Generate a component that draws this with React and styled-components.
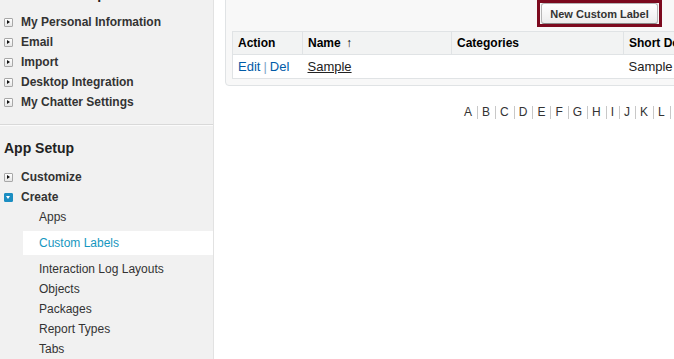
import React from 'react';
import styled, { createGlobalStyle } from 'styled-components';

const GlobalStyle = createGlobalStyle`
  html, body {
    margin: 0;
    padding: 0;
    background: #fff;
    overflow: hidden;
  }
  body {
    font-family: 'Liberation Sans', Arial, sans-serif;
    font-size: 12px;
    color: #333;
  }
`;

const personalItems = [
  'My Personal Information',
  'Email',
  'Import',
  'Desktop Integration',
  'My Chatter Settings',
];

const createItems = [
  { label: 'Apps' },
  { label: 'Custom Labels', selected: true },
  { label: 'Interaction Log Layouts' },
  { label: 'Objects' },
  { label: 'Packages' },
  { label: 'Report Types' },
  { label: 'Tabs' },
];

const letters = 'ABCDEFGHIJKLMNOPQRSTUVWXYZ'.split('');

function App() {
  return (
    <>
      <GlobalStyle />
      <Page>
        <Sidebar>
          <SidebarInner>
            <Section>
              <SectionTitle>Personal Setup</SectionTitle>
              {personalItems.map((item) => (
                <NavRow key={item}>
                  <Toggle />
                  {item}
                </NavRow>
              ))}
            </Section>
            <Section $second>
              <SectionTitle $second>App Setup</SectionTitle>
              <NavRow>
                <Toggle />
                Customize
              </NavRow>
              <NavRow>
                <Toggle $open />
                Create
              </NavRow>
              {createItems.map((item) => (
                <SubRow key={item.label} $selected={item.selected}>
                  {item.label}
                </SubRow>
              ))}
            </Section>
          </SidebarInner>
        </Sidebar>

        <Main>
          <Panel>
            <ButtonRow>
              <Highlight>
                <Button>New Custom Label</Button>
              </Highlight>
            </ButtonRow>
            <Table>
              <colgroup>
                <col style={{ width: 70 }} />
                <col style={{ width: 149 }} />
                <col style={{ width: 172 }} />
                <col style={{ width: 170 }} />
              </colgroup>
              <thead>
                <tr>
                  <Th>Action</Th>
                  <Th>
                    Name <SortArrow>↑</SortArrow>
                  </Th>
                  <Th>Categories</Th>
                  <Th>Short Description</Th>
                </tr>
              </thead>
              <tbody>
                <tr>
                  <Td>
                    <ActionLink>Edit</ActionLink>
                    <Pipe>|</Pipe>
                    <ActionLink>Del</ActionLink>
                  </Td>
                  <Td>
                    <NameLink>Sample</NameLink>
                  </Td>
                  <Td></Td>
                  <Td>Sample</Td>
                </tr>
              </tbody>
            </Table>
          </Panel>

          <Rolodex>
            {letters.map((l) => (
              <Letter key={l}>{l}</Letter>
            ))}
          </Rolodex>
        </Main>
      </Page>
    </>
  );
}

const Page = styled.div`
  display: flex;
  width: 674px;
  height: 359px;
  overflow: hidden;
`;

const Sidebar = styled.div`
  flex: 0 0 213px;
  background: #f1f1f1;
  border-right: 1px solid #e2e2e2;
  overflow: hidden;
`;

const SidebarInner = styled.div`
  margin-top: -28px;
`;

const Section = styled.div`
  padding: 13px 0 ${(p) => (p.$second ? '0' : '12px')};
  border-bottom: ${(p) => (p.$second ? 'none' : '1px solid #d9d9d9')};
  border-top: ${(p) => (p.$second ? '1px solid #fbfbfb' : 'none')};
`;

const SectionTitle = styled.h2`
  margin: 0 0 ${(p) => (p.$second ? '10px' : '9px')} 4px;
  font-size: 14px;
  line-height: 18px;
  font-weight: bold;
  color: #222;
`;

const NavRow = styled.div`
  display: flex;
  align-items: center;
  gap: 8px;
  height: 20px;
  padding-left: 4px;
  font-weight: bold;
  color: #333;
`;

const Toggle = styled.span`
  position: relative;
  box-sizing: border-box;
  width: 9px;
  height: 9px;
  border: 1px solid ${(p) => (p.$open ? '#1c8ec2' : '#a8a8a8')};
  border-radius: 1px;
  background: ${(p) =>
    p.$open ? '#1c8ec2' : 'linear-gradient(#ffffff, #e6e6e6)'};

  &::after {
    content: '';
    position: absolute;
    left: ${(p) => (p.$open ? '1px' : '2px')};
    top: ${(p) => (p.$open ? '2px' : '1px')};
    width: 0;
    height: 0;
    border-style: solid;
    border-width: ${(p) => (p.$open ? '3px 2.5px 0 2.5px' : '2.5px 0 2.5px 3px')};
    border-color: ${(p) =>
      p.$open
        ? '#fff transparent transparent transparent'
        : 'transparent transparent transparent #111'};
  }
`;

const SubRow = styled.div`
  height: ${(p) => (p.$selected ? '24px' : '20px')};
  line-height: ${(p) => (p.$selected ? '24px' : '20px')};
  margin: ${(p) => (p.$selected ? '4px -1px 4px 23px' : '0')};
  padding-left: ${(p) => (p.$selected ? '16px' : '39px')};
  background: ${(p) => (p.$selected ? '#fff' : 'transparent')};
  color: ${(p) => (p.$selected ? '#1797c0' : '#333')};
`;

const Main = styled.div`
  flex: 1;
  min-width: 0;
  background: #fff;
  padding-left: 11px;
  overflow: hidden;
`;

const Panel = styled.div`
  width: 600px;
  margin-top: -6px;
  padding: 5px 6px 6px;
  background: #f8f8f8;
  border: 1px solid #e0e3e5;
  border-radius: 4px;
`;

const ButtonRow = styled.div`
  display: flex;
  padding-left: 305px;
  margin-bottom: 4px;
`;

const Highlight = styled.div`
  border: 3px solid #7c0a1f;
  padding: 0 1px;
`;

const Button = styled.button`
  display: block;
  width: 117px;
  height: 21px;
  padding: 0;
  border: 1px solid #b5b5b5;
  border-bottom-color: #8a8a8a;
  border-radius: 3px;
  background: linear-gradient(#ffffff, #ededed);
  font-family: 'Liberation Sans', Arial, sans-serif;
  font-size: 11px;
  font-weight: bold;
  color: #333;
`;

const Table = styled.table`
  border-collapse: collapse;
  table-layout: fixed;
  width: 561px;
  background: #fff;
  border: 1px solid #e0e3e5;
`;

const Th = styled.th`
  height: 22px;
  padding: 0 5px;
  text-align: left;
  background: #f2f3f3;
  border-right: 1px solid #e0e3e5;
  border-bottom: 1px solid #e0e3e5;
  font-size: 12px;
  font-weight: bold;
  color: #000;
  white-space: nowrap;
  overflow: hidden;
`;

const SortArrow = styled.span`
  margin-left: 2px;
  font-size: 12px;
  font-weight: normal;
`;

const Td = styled.td`
  height: 23px;
  padding: 0 5px;
  font-size: 13px;
  color: #222;
  white-space: nowrap;
  border-bottom: 1px solid #e0e3e5;
`;

const ActionLink = styled.a`
  color: #015ba7;
  text-decoration: none;
`;

const Pipe = styled.span`
  margin: 0 3px;
  color: #7fa6c8;
`;

const NameLink = styled.a`
  color: #222;
  text-decoration: underline;
`;

const Rolodex = styled.div`
  display: flex;
  align-items: center;
  margin-top: 20px;
  padding-left: 235px;
  white-space: nowrap;
`;

const Letter = styled.span`
  padding: 0 5px 0 4px;
  border-right: 1px solid #c8c8c8;
  line-height: 13px;
  font-size: 12px;
  color: #333;
`;

export default App;
